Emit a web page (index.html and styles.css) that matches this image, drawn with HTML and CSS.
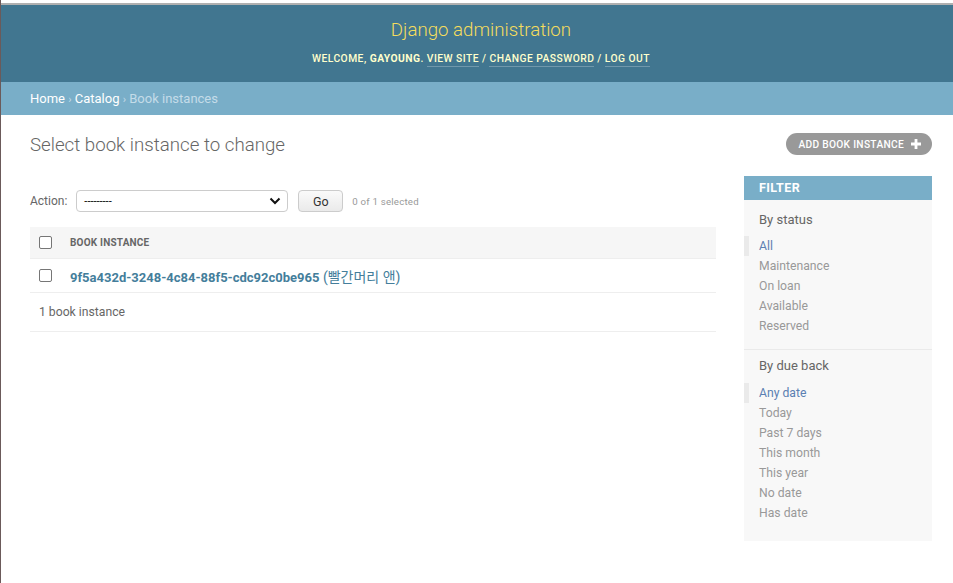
FILE: index.html
```html
<!DOCTYPE html>
<html lang="en">
<head>
<meta charset="utf-8">
<title>Select book instance to change | Django site admin</title>
<link rel="stylesheet" href="styles.css">
</head>
<body>
<div class="frame">
  <header class="header">
    <h1 class="site-name">Django administration</h1>
    <div class="user-tools">
      Welcome, <strong>gayoung</strong>.
      <a href="#">View site</a> /
      <a href="#">Change password</a> /
      <a href="#">Log out</a>
    </div>
  </header>
  <nav class="breadcrumbs">
    <a href="#">Home</a> <span class="sep">›</span> <a href="#">Catalog</a> <span class="sep">›</span> Book instances
  </nav>
  <main class="content">
    <div class="title-row">
      <h1 class="page-title">Select book instance to change</h1>
      <a class="addlink" href="#">Add book instance
        <svg class="plus" width="10" height="10" viewBox="0 0 10 10"><path d="M3.6 0h2.8v3.6H10v2.8H6.4V10H3.6V6.4H0V3.6h3.6z" fill="#fff"/></svg>
      </a>
    </div>
    <div class="changelist">
      <div class="results-col">
        <div class="actions">
          <label class="action-label">Action:</label>
          <div class="select">
            <span>---------</span>
            <svg width="12" height="8" viewBox="0 0 12 8"><path d="M1.5 1.5l4.5 4.5 4.5-4.5" fill="none" stroke="#111" stroke-width="2"/></svg>
          </div>
          <button class="go">Go</button>
          <span class="counter">0 of 1 selected</span>
        </div>
        <div class="results">
          <div class="row head">
            <span class="cb"></span>
            <span class="th">Book instance</span>
          </div>
          <div class="row">
            <span class="cb"></span>
            <a class="item-link" href="#">9f5a432d-3248-4c84-88f5-cdc92c0be965<span class="kr"> (빨간머리 앤)</span></a>
          </div>
        </div>
        <p class="paginator">1 book instance</p>
      </div>
      <aside class="filter">
        <h2 class="filter-title">Filter</h2>
        <h3 class="filter-h">By status</h3>
        <ul class="filter-list">
          <li class="selected"><a href="#">All</a></li>
          <li><a href="#">Maintenance</a></li>
          <li><a href="#">On loan</a></li>
          <li><a href="#">Available</a></li>
          <li><a href="#">Reserved</a></li>
        </ul>
        <h3 class="filter-h divided">By due back</h3>
        <ul class="filter-list">
          <li class="selected"><a href="#">Any date</a></li>
          <li><a href="#">Today</a></li>
          <li><a href="#">Past 7 days</a></li>
          <li><a href="#">This month</a></li>
          <li><a href="#">This year</a></li>
          <li><a href="#">No date</a></li>
          <li><a href="#">Has date</a></li>
        </ul>
      </aside>
    </div>
  </main>
</div>
</body>
</html>
```
FILE: styles.css
```css
html, body {
  margin: 0;
  padding: 0;
  background: #fff;
}
body {
  font-family: Roboto, "Noto Sans CJK KR", "Liberation Sans", sans-serif;
  color: #333;
  font-size: 13px;
}
.frame {
  border-left: 1px solid #6b5a5a;
  min-height: 583px;
  box-sizing: border-box;
  padding-top: 3px;
}
a { text-decoration: none; }

.header {
  border-top: 2px solid #b0b0b0;
  background: #417690;
  height: 79px;
  box-sizing: border-box;
  padding: 14px 0 0 8px;
  text-align: center;
}
.site-name {
  margin: 0;
  font-size: 18.7px;
  font-weight: 300;
  color: #f5dd5d;
  line-height: 22px;
}
.user-tools {
  margin-top: 11px;
  font-size: 10.3px;
  letter-spacing: 0.45px;
  text-transform: uppercase;
  color: #ffc;
  font-weight: 500;
  line-height: 13px;
}
.user-tools strong { font-weight: 700; }
.user-tools a {
  color: #ffc;
  border-bottom: 1px solid rgba(255,255,255,0.25);
  padding-bottom: 1px;
}

.breadcrumbs {
  background: #79aec8;
  height: 33px;
  box-sizing: border-box;
  padding: 9px 29px;
  font-size: 13px;
  line-height: 16px;
  color: #c4dce8;
}
.breadcrumbs a { color: #fff; }
.breadcrumbs .sep { font-size: 11px; }

.content {
  padding: 18px 21px 20px 29px;
}
.title-row {
  display: flex;
  justify-content: space-between;
  align-items: flex-start;
}
.page-title {
  margin: 0;
  font-size: 18.7px;
  font-weight: 300;
  color: #666;
  line-height: 24px;
}
.addlink {
  background: #999;
  color: #fff;
  border-radius: 15px;
  height: 22px;
  box-sizing: border-box;
  padding: 0 11px 0 12px;
  display: flex;
  align-items: center;
  gap: 7px;
  font-size: 10.2px;
  font-weight: 500;
  letter-spacing: 0.3px;
  text-transform: uppercase;
}

.changelist {
  display: flex;
  margin-top: 19px;
  gap: 28px;
  align-items: flex-start;
}
.results-col { flex: 1; }
.filter {
  width: 188px;
  flex: none;
  background: #f8f8f8;
  padding-bottom: 18px;
}

.actions {
  margin-top: 14px;
  display: flex;
  align-items: center;
  height: 22px;
  margin-bottom: 15px;
}
.action-label {
  font-size: 12px;
  color: #666;
  margin-right: 9px;
}
.select {
  width: 212px;
  height: 22px;
  box-sizing: border-box;
  border: 1px solid #ccc;
  border-radius: 4px;
  display: flex;
  justify-content: space-between;
  align-items: center;
  padding: 0 6px 0 7px;
  font-size: 11px;
  color: #000;
  background: #fff;
}
.go {
  margin-left: 10px;
  width: 45px;
  height: 22px;
  border: 1px solid #ccc;
  border-radius: 4px;
  background: linear-gradient(#fafafa, #eaeaea);
  font-family: Roboto, sans-serif;
  font-size: 12.5px;
  color: #333;
  padding: 0;
}
.counter {
  margin-left: 9px;
  font-size: 9.7px;
  color: #999;
  letter-spacing: 0.2px;
}

.row {
  display: flex;
  align-items: center;
  border-bottom: 1px solid #eee;
  height: 34px;
  box-sizing: border-box;
}
.row.head {
  background: #f6f6f6;
  height: 32px;
}
.cb {
  width: 11px;
  height: 11px;
  border: 1px solid #767676;
  border-radius: 2px;
  background: #fff;
  margin-left: 9px;
  margin-right: 18px;
  flex: none;
}
.th {
  font-size: 10px;
  font-weight: 700;
  color: #666;
  text-transform: uppercase;
  letter-spacing: 0.2px;
}
.item-link {
  color: #447e9b;
  font-weight: 700;
  font-size: 13px;
}
.item-link .kr { font-weight: 400; font-size: 14px; }

.paginator {
  margin: 0;
  height: 39px;
  box-sizing: border-box;
  border-bottom: 1px solid #eee;
  padding-left: 9px;
  font-size: 12.2px;
  color: #666;
  line-height: 38px;
}

.filter-title {
  margin: 0;
  background: #79aec8;
  color: #fff;
  font-size: 12.5px;
  font-weight: 700;
  text-transform: uppercase;
  letter-spacing: 0.4px;
  padding: 4px 15px;
  line-height: 16px;
}
.filter-h {
  margin: 0;
  font-size: 13px;
  font-weight: 400;
  color: #666;
  padding: 12px 15px 8px;
  line-height: 16px;
}
.filter-h.divided {
  border-top: 1px solid #eaeaea;
  margin-top: 13px;
  padding-top: 8px;
  padding-bottom: 9px;
}
.filter-list {
  list-style: none;
  margin: 0;
  padding: 0;
}
.filter-list li {
  font-size: 12.2px;
  line-height: 20px;
  padding-left: 15px;
}
.filter-list li a { color: #999; }
.filter-list li.selected {
  border-left: 5px solid #eaeaea;
  padding-left: 10px;
}
.filter-list li.selected a { color: #5b80b2; }
```
